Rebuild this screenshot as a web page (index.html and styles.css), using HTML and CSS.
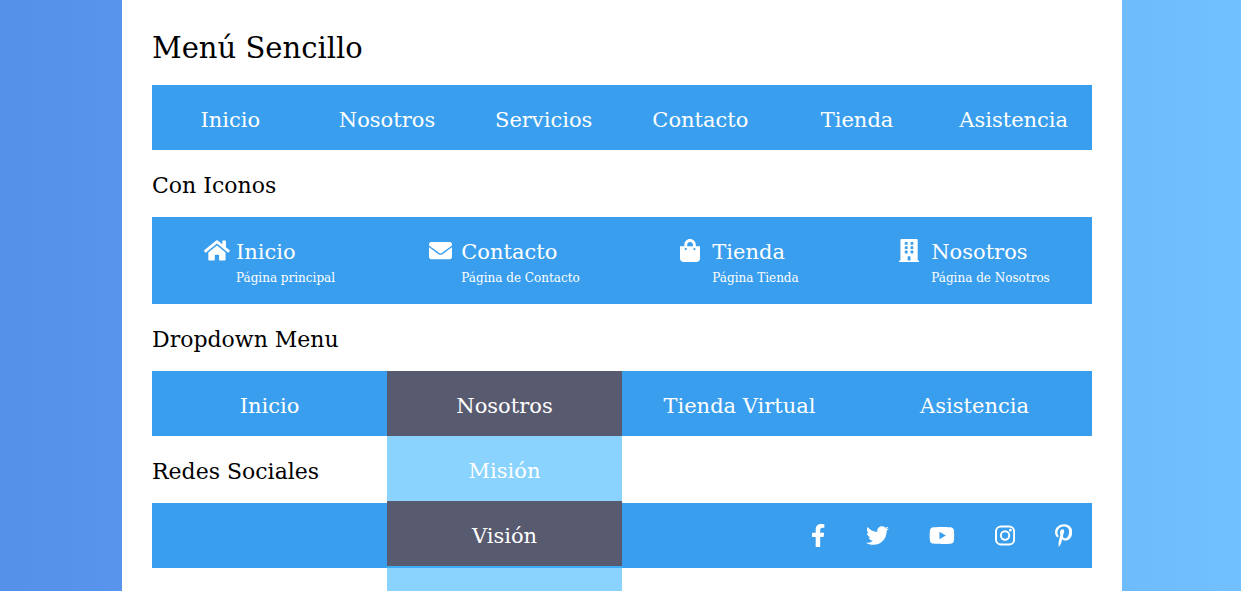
FILE: index.html
```
<!DOCTYPE html>
<html lang="es">
<head>
<meta charset="utf-8">
<meta name="viewport" content="width=device-width, initial-scale=1">
<title>Menú Sencillo</title>
<link rel="stylesheet" href="styles.css">
</head>
<body>
<main class="contenedor">
  <h1 class="titulo">Menú Sencillo</h1>
  <nav class="menu" aria-label="Menú sencillo">
    <a class="enlace" href="#">Inicio</a>
    <a class="enlace" href="#">Nosotros</a>
    <a class="enlace" href="#">Servicios</a>
    <a class="enlace" href="#">Contacto</a>
    <a class="enlace" href="#">Tienda</a>
    <a class="enlace" href="#">Asistencia</a>
  </nav>

  <h2 class="subtitulo">Con Iconos</h2>
  <nav class="menu" aria-label="Con iconos">
    <a class="enlace-icono" href="#">
      <span class="caja-icono"><svg class="icono" viewBox="0 0 576 512" aria-hidden="true"><path d="M280.37 148.26L96 300.11V464a16 16 0 0 0 16 16l112.06-.29a16 16 0 0 0 15.92-16V368a16 16 0 0 1 16-16h64a16 16 0 0 1 16 16v95.64a16 16 0 0 0 16 16.05L464 480a16 16 0 0 0 16-16V300L295.67 148.26a12.19 12.19 0 0 0-15.3 0zM571.6 251.47L488 182.56V44.05a12 12 0 0 0-12-12h-56a12 12 0 0 0-12 12v72.61L318.47 43a48 48 0 0 0-61 0L4.34 251.47a12 12 0 0 0-1.6 16.9l25.5 31A12 12 0 0 0 45.15 301l235.22-193.74a12.19 12.19 0 0 1 15.3 0L530.9 301a12 12 0 0 0 16.9-1.6l25.5-31a12 12 0 0 0-1.7-16.93z"/></svg></span>
      <span class="textos"><span class="nombre">Inicio</span><span class="detalle">Página principal</span></span>
    </a>
    <a class="enlace-icono" href="#">
      <span class="caja-icono"><svg class="icono" viewBox="0 0 512 512" aria-hidden="true"><path d="M502.3 190.8c3.9-3.1 9.7-.2 9.7 4.7V400c0 26.5-21.5 48-48 48H48c-26.5 0-48-21.5-48-48V195.6c0-5 5.7-7.8 9.7-4.7 22.4 17.4 52.1 39.5 154.1 113.6 21.1 15.4 56.7 47.8 92.2 47.6 35.7.3 72-32.8 92.3-47.6 102-74.1 131.6-96.3 154-113.7zM256 320c23.2.4 56.6-29.2 73.4-41.4 132.7-96.3 142.8-104.7 173.4-128.7 5.8-4.5 9.2-11.5 9.2-18.9v-19c0-26.5-21.5-48-48-48H48c-26.5 0-48 21.5-48 48v19c0 7.4 3.4 14.3 9.2 18.9 30.6 23.9 40.7 32.4 173.4 128.7 16.8 12.2 50.2 41.8 73.4 41.4z"/></svg></span>
      <span class="textos"><span class="nombre">Contacto</span><span class="detalle">Página de Contacto</span></span>
    </a>
    <a class="enlace-icono" href="#">
      <span class="caja-icono"><svg class="icono" viewBox="0 0 448 512" aria-hidden="true"><path d="M352 160v-32C352 57.42 294.579 0 224 0 153.42 0 96 57.42 96 128v32H0v272c0 44.183 35.817 80 80 80h288c44.183 0 80-35.817 80-80V160h-96zm-192-32c0-35.29 28.71-64 64-64s64 28.71 64 64v32H160v-32zm160 120c-13.255 0-24-10.745-24-24s10.745-24 24-24 24 10.745 24 24-10.745 24-24 24zm-192 0c-13.255 0-24-10.745-24-24s10.745-24 24-24 24 10.745 24 24-10.745 24-24 24z"/></svg></span>
      <span class="textos"><span class="nombre">Tienda</span><span class="detalle">Página Tienda</span></span>
    </a>
    <a class="enlace-icono" href="#">
      <span class="caja-icono"><svg class="icono" viewBox="0 0 448 512" aria-hidden="true"><path fill-rule="evenodd" d="M436 480h-20V24c0-13.255-10.745-24-24-24H56C42.745 0 32 10.745 32 24v456H12c-6.627 0-12 5.373-12 12v20h448v-20c0-6.627-5.373-12-12-12zM140 64h40q12 0 12 12v40q0 12-12 12h-40q-12 0-12-12V76q0-12 12-12zM268 64h40q12 0 12 12v40q0 12-12 12h-40q-12 0-12-12V76q0-12 12-12zM140 160h40q12 0 12 12v40q0 12-12 12h-40q-12 0-12-12v-40q0-12 12-12zM268 160h40q12 0 12 12v40q0 12-12 12h-40q-12 0-12-12v-40q0-12 12-12zM140 256h40q12 0 12 12v40q0 12-12 12h-40q-12 0-12-12v-40q0-12 12-12zM268 256h40q12 0 12 12v40q0 12-12 12h-40q-12 0-12-12v-40q0-12 12-12zM204 384h40q12 0 12 12v84h-64v-84q0-12 12-12z"/></svg></span>
      <span class="textos"><span class="nombre">Nosotros</span><span class="detalle">Página de Nosotros</span></span>
    </a>
  </nav>

  <h2 class="subtitulo">Dropdown Menu</h2>
  <nav class="menu" aria-label="Dropdown menu">
    <a class="enlace" href="#">Inicio</a>
    <div class="desplegable">
      <a class="enlace activo" href="#" aria-expanded="true">Nosotros</a>
      <div class="submenu">
        <a class="enlace" href="#">Misión</a>
        <a class="enlace activo" href="#">Visión</a>
      </div>
    </div>
    <a class="enlace" href="#">Tienda Virtual</a>
    <a class="enlace" href="#">Asistencia</a>
  </nav>

  <h2 class="subtitulo">Redes Sociales</h2>
  <nav class="menu redes" aria-label="Redes sociales">
    <a class="red" href="#" aria-label="Facebook"><svg class="icono" viewBox="0 0 320 512" aria-hidden="true"><path d="M279.14 288l14.22-92.66h-88.91v-60.13c0-25.35 12.42-50.06 52.24-50.06h40.42V6.26S260.43 0 225.36 0c-73.22 0-121.08 44.38-121.08 124.72v70.62H22.89V288h81.39v224h100.17V288z"/></svg></a>
    <a class="red" href="#" aria-label="Twitter"><svg class="icono" viewBox="0 0 512 512" aria-hidden="true"><path d="M459.37 151.716c.325 4.548.325 9.097.325 13.645 0 138.72-105.583 298.558-298.558 298.558-59.452 0-114.68-17.219-161.137-47.106 8.447.974 16.568 1.299 25.34 1.299 49.055 0 94.213-16.568 130.274-44.832-46.132-.975-84.792-31.188-98.112-72.772 6.498.974 12.995 1.624 19.818 1.624 9.421 0 18.843-1.3 27.614-3.573-48.081-9.747-84.143-51.98-84.143-102.985v-1.299c13.969 7.797 30.214 12.67 47.431 13.319-28.264-18.843-46.781-51.005-46.781-87.391 0-19.492 5.197-37.36 14.294-52.954 51.655 63.675 129.3 105.258 216.365 109.807-1.624-7.797-2.599-15.918-2.599-24.04 0-57.828 46.782-104.934 104.934-104.934 30.213 0 57.502 12.67 76.67 33.137 23.715-4.548 46.456-13.32 66.599-25.34-7.798 24.366-24.366 44.833-46.132 57.827 21.117-2.273 41.584-8.122 60.426-16.243-14.292 20.791-32.161 39.308-52.628 54.253z"/></svg></a>
    <a class="red" href="#" aria-label="YouTube"><svg class="icono" viewBox="0 0 576 512" aria-hidden="true"><path d="M549.655 124.083c-6.281-23.65-24.787-42.276-48.284-48.597C458.781 64 288 64 288 64S117.22 64 74.629 75.486c-23.497 6.322-42.003 24.947-48.284 48.597-11.412 42.867-11.412 132.305-11.412 132.305s0 89.438 11.412 132.305c6.281 23.65 24.787 41.5 48.284 47.821C117.22 448 288 448 288 448s170.78 0 213.371-11.486c23.497-6.321 42.003-24.171 48.284-47.821 11.412-42.867 11.412-132.305 11.412-132.305s0-89.438-11.412-132.305zm-317.51 213.508V175.185l142.739 81.205-142.739 81.201z"/></svg></a>
    <a class="red" href="#" aria-label="Instagram"><svg class="icono" viewBox="0 0 448 512" aria-hidden="true"><rect class="trazo" x="22" y="54" width="404" height="404" rx="112"/><circle class="trazo" cx="224" cy="256" r="93"/><circle cx="343" cy="137" r="30"/></svg></a>
    <a class="red" href="#" aria-label="Pinterest"><svg class="icono" viewBox="0 0 384 512" aria-hidden="true"><path d="M204 6.5C101.4 6.5 0 74.9 0 185.6 0 256 39.6 296 63.6 296c9.9 0 15.6-27.6 15.6-35.4 0-9.3-23.7-29.1-23.7-67.8 0-80.4 61.2-137.4 140.4-137.4 68.1 0 118.5 38.7 118.5 109.8 0 53.1-21.3 152.7-90.3 152.7-24.9 0-46.2-18-46.2-43.8 0-37.8 26.4-74.4 26.4-113.4 0-66.2-93.9-54.2-93.9 25.8 0 16.8 2.1 35.4 9.6 50.7-13.8 59.4-42 147.9-42 209.1 0 18.9 2.7 37.5 4.5 56.4 3.4 3.8 1.7 3.4 6.9 1.5 50.4-69 48.6-82.5 71.4-172.8 12.3 23.4 44.1 36 69.3 36 106.2 0 153.9-103.5 153.9-196.8C384 71.3 298.2 6.5 204 6.5z"/></svg></a>
  </nav>
</main>
</body>
</html>
```
FILE: styles.css
```
* {
  box-sizing: border-box;
}

body {
  margin: 0;
  padding-left: 3px;
  min-height: 100vh;
  font-family: "DejaVu Serif", serif;
  background: linear-gradient(to right, #5590e9, #71c0ff);
}

.contenedor {
  max-width: 1000px;
  min-height: 100vh;
  margin: 0 auto;
  padding: 24px 30px 20px;
  background: #fff;
}

.titulo,
.subtitulo {
  margin: 0;
  font-weight: 400;
  color: #000;
}

.titulo {
  padding-bottom: 13px;
  font-size: 29px;
  line-height: 48px;
}

.subtitulo {
  padding: 18px 0 13px;
  font-size: 22px;
  line-height: 36px;
}

.menu {
  display: flex;
  background: #399eed;
}

.enlace,
.enlace-icono,
.red {
  color: #fff;
  text-decoration: none;
}

.enlace {
  display: block;
  flex: 1 1 0;
  padding: 22px 0 17px;
  font-size: 21px;
  line-height: 26px;
  text-align: center;
}

.enlace:hover,
.activo {
  background: #585b70;
}

.enlace-icono {
  display: flex;
  flex: 1 1 0;
  justify-content: center;
  padding: 22px 0 13px;
}

.caja-icono {
  width: 32px;
}

.icono {
  display: block;
  height: 23px;
  fill: #fff;
}

.trazo {
  fill: none;
  stroke: #fff;
  stroke-width: 44;
}

.textos {
  display: flex;
  flex-direction: column;
}

.nombre {
  font-size: 21px;
  line-height: 26px;
}

.detalle {
  font-size: 12px;
  line-height: 26px;
}

.desplegable {
  position: relative;
  flex: 1 1 0;
}

.submenu {
  position: absolute;
  top: 100%;
  left: 0;
  width: 100%;
  padding-bottom: 25px;
  background: rgba(60, 182, 255, 0.6);
}

.redes {
  justify-content: flex-end;
}

.red {
  padding: 21px 20px;
}
```
